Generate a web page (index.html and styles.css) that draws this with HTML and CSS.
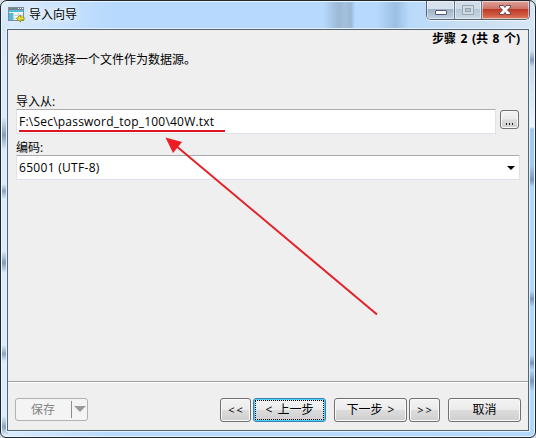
FILE: index.html
```html
<!DOCTYPE html>
<html lang="zh-CN">
<head>
<meta charset="utf-8">
<title>导入向导</title>
<link rel="stylesheet" href="styles.css">
</head>
<body>
<div class="window">
  <header class="titlebar">
    <svg class="app-icon" width="17" height="16" viewBox="0 0 17 16">
      <rect x=".5" y=".5" width="15" height="13" fill="#eef5f7" stroke="#7d8b93"/>
      <path d="M1 1h14v2H1z" fill="#71838d"/>
      <path d="M10 1h1v1h-1zM12 1h1v1h-1zM14 1h1v1h-1z" fill="#fff"/>
      <path d="M1 3h14v2H1zM1 6h4v7H1z" fill="#4fb9d6"/>
      <path d="M5.500 6v7M10.500 6v7M5 8.500h10M5 11.500h10" stroke="#c5d5da"/>
      <path d="M8.500 11.500l4-3.500v2h3.500v3h-3.500v2z" fill="#ece02c" stroke="#a0961c"/>
    </svg>
    <h1 class="title">导入向导</h1>
    <div class="caption-buttons">
      <span class="cap cap-min"><svg width="28" height="18"><rect x="8.500" y="9.500" width="11" height="4" rx=".5" fill="#fff" stroke="#535c6b"/></svg></span>
      <span class="cap cap-max"><svg width="26" height="18"><rect x="7.500" y="4.500" width="11" height="9" fill="#d1dbe2" stroke="#9aa7b2"/><rect x="10.500" y="7.500" width="5" height="3" fill="#b5c4d0" stroke="#93a1ad"/></svg></span>
      <span class="cap cap-close"><svg width="46" height="18"><path d="M17.500 4.500h4l1.500 2 1.500-2h4v1.500l-3 3 3 3v1.500h-4l-1.500-2-1.500 2h-4V12l3-3-3-3z" fill="#fff" stroke="#684550"/></svg></span>
    </div>
  </header>
  <main class="client">
    <div class="step">步骤 2 (共 8 个)</div>
    <p class="intro">你必须选择一个文件作为数据源。</p>
    <label class="label label-from">导入从:</label>
    <div class="file-row">
      <div class="field file-field">F:\Sec\password_top_100\40W.txt</div>
      <button class="btn browse"><i></i><i></i><i></i></button>
    </div>
    <label class="label label-enc">编码:</label>
    <div class="field select"><span>65001 (UTF-8)</span><svg width="8" height="4"><path d="M0 0h8L4 4z" fill="#000"/></svg></div>
    <footer class="footer">
      <div class="save"><span>保存</span><svg width="12" height="6"><path d="M0 0h12L6 6z" fill="#999"/></svg></div>
      <button class="btn small first">&lt;&lt;</button>
      <button class="btn wide focus"><span>&lt; 上一步</span></button>
      <button class="btn wide next">下一步 &gt;</button>
      <button class="btn small last">&gt;&gt;</button>
      <button class="btn wide cancel">取消</button>
    </footer>
  </main>
  <svg class="annotation" width="536" height="438">
    <path d="M19 131L225 131" stroke="#dd1425" stroke-width="2"/>
    <path d="M377 314.500L175 145" stroke="#e32128" stroke-width="2"/>
    <path d="M165.500 137.500L182 142L173 153z" fill="#ed1c24"/>
  </svg>
</div>
</body>
</html>
```
FILE: styles.css
```css
* { box-sizing: border-box; }
body {
  margin: 0;
  width: 536px;
  height: 438px;
  overflow: hidden;
  background: #d5dce3;
  font: 12px/16px "Open Sans", "Noto Sans CJK SC", sans-serif;
  color: #000;
}
.window {
  position: relative;
  display: flex;
  flex-direction: column;
  width: 536px;
  height: 438px;
  padding: 0 5px 5px;
  border: 1px solid #20262f;
  border-radius: 7px 7px 6px 6px;
  box-shadow: inset 0 0 0 1px #e9f5ff;
  background:
    linear-gradient(90deg, transparent 322px, #9bb8d5 338px, #a5c0dc 344px, #9bb8d5 350px, transparent 354px) 0 0 / 370px 28px no-repeat,
    linear-gradient(90deg, transparent 376px, #9bbfe2 395px, transparent 408px) 0 0 / 420px 28px no-repeat,
    linear-gradient(90deg, transparent 395px, #ccdff2 480px, #d7e7f6 100%) 0 0 / 100% 28px no-repeat,
    linear-gradient(#e4effa 0, #d3e6f8 25px, transparent 65px) 0 0 / 8px 100% no-repeat,
    linear-gradient(transparent 116px, #869fbd 134px, transparent 149px, transparent 183px, #89a2c0 190px, transparent 198px, transparent 250px, #829bba 262px, transparent 272px, transparent 344px, #89a2c0 353px, transparent 360px, transparent 415px, #8ba2bd 426px, transparent 434px) 0 0 / 7px 100% no-repeat,
    linear-gradient(#d4e6f7 0, #cce0f4 50px, #8099b3 59px, #c7dcf2 66px, #eaf4fc 126px, #a3c8ec 128px, #a5caee 165px, #7896b6 179px, #b2d7fb 186px, #b2d7fb 290px, #7896b6 298px, #b2d7fb 306px, #b2d7fb 354px, #7896b6 362px, #b2d7fb 369px, #7896b6 380px, #b2d7fb 390px) 100% 0 / 7px 100% no-repeat,
    linear-gradient(90deg, #dcecfc 0, #b7d9fd 110px, #b5d9fc 100%);
}
.titlebar {
  display: flex;
  flex: 0 0 27px;
  align-items: flex-start;
  padding-left: 2px;
}
.app-icon { margin-top: 6px; }
.title {
  margin: 6px auto 0 4px;
  font-size: 12px;
  line-height: 16px;
  font-weight: 400;
  text-shadow: 0 0 7px #fff, 0 0 10px #fff;
}
.caption-buttons {
  display: flex;
  width: 104px;
  height: 19px;
  border: 1px solid #596575;
  border-top: 0;
  border-radius: 0 0 5px 5px;
  box-shadow: 0 1px 0 #edf6fd;
  overflow: hidden;
}
.cap { height: 18px; box-shadow: inset 0 0 0 1px rgba(255,255,255,.5); }
.cap svg { display: block; }
.cap-min {
  width: 28px;
  border-right: 1px solid #66758a;
  background: linear-gradient(#d6e1ed 0 8px, #9eafc3 8px, #c0d3e6);
}
.cap-max {
  width: 27px;
  border-right: 1px solid #66758a;
  background: linear-gradient(#cfdce8 0 8px, #b5c6d6 8px, #c9d9e7);
}
.cap-close { width: 47px; background: linear-gradient(#dfa49b 0, #cc7164 8px, #bc3826 8px, #cf5940 14px, #de846a); }
.client {
  display: flex;
  flex-direction: column;
  width: 522px;
  height: 402px;
  margin-left: 1px;
  border: 1px solid #536476;
  margin-top: 1px;
  padding: 1px 7px 0 8px;
  background: #efefef;
  box-shadow: 0 0 0 1px #e2f2fe;
}
.step {
  height: 16px;
  align-self: flex-end;
  margin-right: 1px;
  font-weight: 700;
  word-spacing: 1.4px;
}
.intro { height: 16px; margin: 5px 0 0; }
.label { display: block; height: 15px; }
.label-from { margin-top: 26px; }
.file-row { display: flex; gap: 4px; align-items: flex-start; }
.field {
  height: 25px;
  padding: 4px 3px 0 2px;
  border: 1px solid #dfe2ea;
  border-top-color: #a9abb1;
  border-radius: 1px;
  background: #fff;
}
.file-field { width: 480px; letter-spacing: .22px; }
.label-enc { margin-top: 6px; }
.select { display: flex; width: 504px; justify-content: space-between; letter-spacing: .3px; }
.select svg { margin: 6px 1px 0 0; }
.btn {
  height: 24px;
  padding: 0;
  border: 1px solid #707070;
  border-radius: 3px;
  background: linear-gradient(#f3f3f3, #ebebeb 48%, #dcdcdc 52%, #cfcfcf);
  box-shadow: inset 0 0 0 1px #fafafa;
  font: inherit;
  line-height: 20px;
  color: #000;
}
.browse {
  display: flex;
  width: 19px;
  height: 19px;
  margin-top: 1px;
  padding-top: 8px;
  justify-content: center;
  align-items: center;
  gap: 2px;
}
.browse i { width: 1px; height: 2px; background: #20182c; }
.footer {
  display: flex;
  height: 49px;
  margin: auto -7px 0 -8px;
  padding: 16px 6px 0 7px;
  border-top: 1px solid #9e9e9e;
  box-shadow: inset 0 1px 0 #fff;
}
.save {
  display: flex;
  width: 73px;
  height: 23px;
  align-items: center;
  border: 1px solid #adb2b5;
  border-radius: 3px;
  background: #f4f4f4;
  color: #838383;
}
.save span { width: 56px; height: 17px; padding-left: 15px; border-right: 1px solid #8e8e8e; line-height: 18px; }
.save svg { margin: -2px 0 0 2px; }
.small { width: 31px; letter-spacing: 2px; padding-left: 2px; font-size: 11px; }
.wide { width: 73px; }
.first { margin-left: 132px; }
.focus {
  margin-left: 2px;
  padding: 1px;
  border-color: #3c7fb1;
  box-shadow: inset 0 0 0 1px #45d1fa;
  word-spacing: 2px;
}
.focus span { display: block; height: 20px; border: 1px dotted #000; line-height: 18px; }
.next { margin-left: 8px; word-spacing: 2px; }
.last { margin-left: 2px; }
.cancel { margin-left: 8px; }
.annotation { position: absolute; top: -1px; left: -1px; pointer-events: none; }
```
